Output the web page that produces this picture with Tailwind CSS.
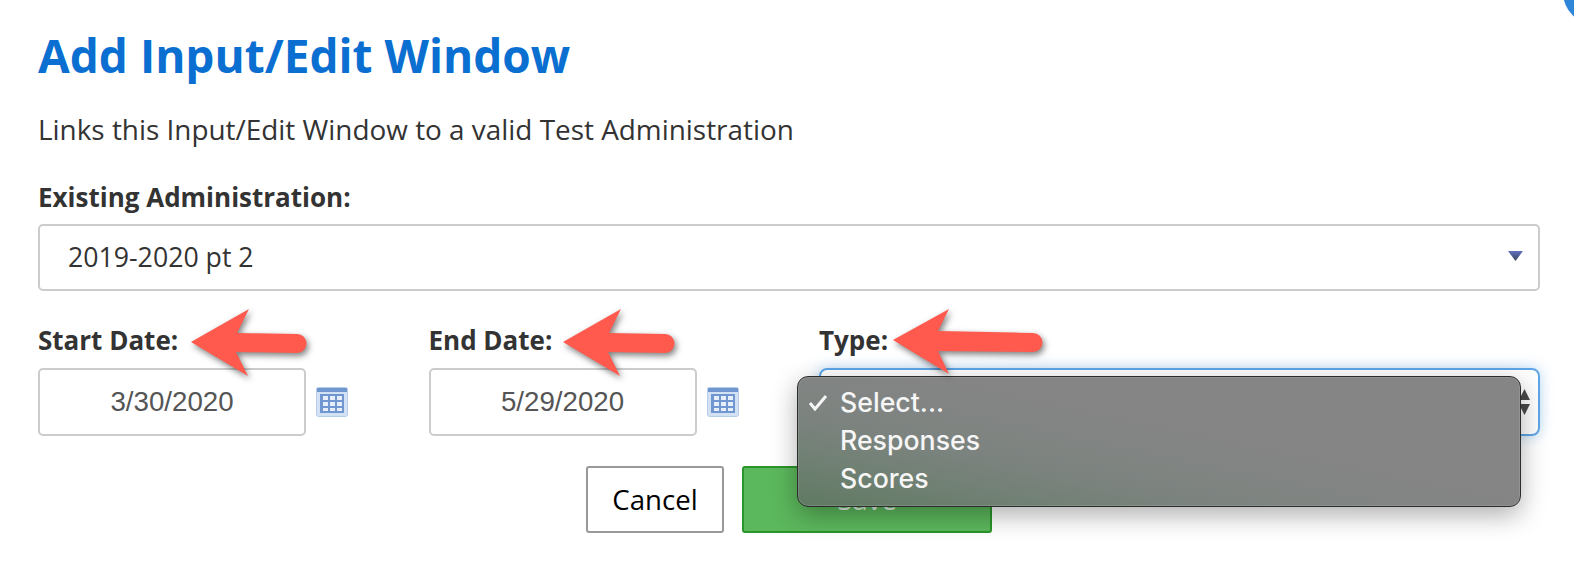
<!doctype html>
<html lang="en">
<head>
<meta charset="utf-8">
<title>Add Input/Edit Window</title>
<script src="https://cdn.jsdelivr.net/npm/@tailwindcss/browser@4"></script>
</head>
<body class="bg-white">
<div class="relative w-[1574px] h-[572px] overflow-hidden bg-white font-['Open_Sans',sans-serif] text-[#333] pl-[38px] pr-[34px] pt-[27px]">
  <div class="absolute left-[1563px] top-[-41px] w-[66px] h-[66px] rounded-full bg-[#2f86d9]"></div>

  <h1 class="text-[46px] leading-[56px] font-bold text-[#0a6fd0]">Add Input/Edit Window</h1>
  <p class="mt-[29px] text-[27.9px] leading-[34px]">Links this Input/Edit Window to a valid Test Administration</p>

  <label class="block mt-[34px] text-[26px] leading-[34px] font-bold">Existing Administration:</label>
  <div class="mt-[10px] h-[67px] flex items-center justify-between rounded-[5px] border-2 border-[#cccccc] pl-[28px] pr-[15px] text-[26.7px]">
    <span>2019-2020 pt 2</span>
    <svg class="-mt-[3px]" width="15" height="10" viewBox="0 0 15 10"><defs><linearGradient id="caret" x1="0" y1="0" x2="0" y2="1"><stop offset="0" stop-color="#5f72c0"/><stop offset="1" stop-color="#3c4358"/></linearGradient></defs><path d="M0 0h15L7.5 10z" fill="url(#caret)"/></svg>
  </div>

  <div class="mt-[32px] grid grid-cols-[390.5px_390.5px_1fr]">
    <div>
      <div class="text-[26px] leading-[34px] font-bold">Start Date:</div>
      <div class="mt-[11px] flex items-center gap-[10px]">
        <div class="w-[268px] h-[68px] flex items-center justify-center rounded-[5px] border-2 border-[#cccccc] font-['Liberation_Sans',sans-serif] text-[27.7px] text-[#555]">3/30/2020</div>
        <svg width="32" height="30" viewBox="0 0 32 30"><rect x="0.5" y="0.5" width="31" height="29" rx="2" fill="#d3e1f5" stroke="#b7cceb"/><rect x="1" y="1" width="30" height="4" fill="#7097d0"/><rect x="4" y="7" width="24" height="19" fill="#7197d0"/><g fill="#e6effb"><rect x="7" y="9" width="5" height="4"/><rect x="14" y="9" width="5" height="4"/><rect x="21" y="9" width="5" height="4"/><rect x="7" y="15" width="5" height="4"/><rect x="14" y="15" width="5" height="4"/><rect x="21" y="15" width="5" height="4"/><rect x="7" y="21" width="5" height="3"/><rect x="14" y="21" width="5" height="3"/><rect x="21" y="21" width="5" height="3"/></g></svg>
      </div>
    </div>
    <div>
      <div class="text-[26px] leading-[34px] font-bold">End Date:</div>
      <div class="mt-[11px] flex items-center gap-[10px]">
        <div class="w-[268px] h-[68px] flex items-center justify-center rounded-[5px] border-2 border-[#cccccc] font-['Liberation_Sans',sans-serif] text-[27.7px] text-[#555]">5/29/2020</div>
        <svg width="32" height="30" viewBox="0 0 32 30"><rect x="0.5" y="0.5" width="31" height="29" rx="2" fill="#d3e1f5" stroke="#b7cceb"/><rect x="1" y="1" width="30" height="4" fill="#7097d0"/><rect x="4" y="7" width="24" height="19" fill="#7197d0"/><g fill="#e6effb"><rect x="7" y="9" width="5" height="4"/><rect x="14" y="9" width="5" height="4"/><rect x="21" y="9" width="5" height="4"/><rect x="7" y="15" width="5" height="4"/><rect x="14" y="15" width="5" height="4"/><rect x="21" y="15" width="5" height="4"/><rect x="7" y="21" width="5" height="3"/><rect x="14" y="21" width="5" height="3"/><rect x="21" y="21" width="5" height="3"/></g></svg>
      </div>
    </div>
    <div>
      <div class="text-[26px] leading-[34px] font-bold">Type:</div>
      <div class="mt-[11px] h-[68px] flex items-center justify-end rounded-[8px] border-2 border-[#5ea6e6] shadow-[0_0_14px_rgba(94,166,230,0.45)] pr-[8px]">
        <svg width="11" height="26" viewBox="0 0 11 26"><path d="M5.5 0L11 11H0zM5.5 26L0 15h11z" fill="#4a4a4a"/></svg>
      </div>
    </div>
  </div>

  <div class="mt-[30px] flex gap-[18px] pl-[548px]">
    <button class="w-[138px] h-[67px] rounded-[3px] border-2 border-[#999] bg-white text-[27.6px] text-black">Cancel</button>
    <button class="w-[250px] h-[67px] rounded-[3px] border-2 border-[#2a952a] bg-[#5cb85c] text-[27.6px] text-white/80">Save</button>
  </div>

  <!-- open native select menu -->
  <div class="absolute left-[797px] top-[376px] w-[724px] h-[131px] rounded-[11px] border border-[#2c2c2c] bg-[linear-gradient(12deg,#5f7a62_0%,#6f8072_16%,#7c837f_32%,#858585_58%)] shadow-[0_8px_26px_rgba(0,0,0,0.32),inset_0_0_0_1px_rgba(255,255,255,0.12)] font-['Inter',sans-serif] font-medium text-[26.7px] leading-[38px] text-[#f6f6f6] pt-[6px] pl-[42px]">
    <svg class="absolute left-[10px] top-[17px]" width="20" height="17" viewBox="0 0 20 17"><path d="M2 9l5 6L18 2" fill="none" stroke="#f6f6f6" stroke-width="3"/></svg>
    <div>Select...</div>
    <div>Responses</div>
    <div>Scores</div>
  </div>

  <!-- annotation arrows -->
  <svg class="absolute left-0 top-0 pointer-events-none drop-shadow-[2px_3px_3px_rgba(0,0,0,0.5)]" width="1574" height="572" viewBox="0 0 1574 572">
    <path fill="#ff5a4d" d="M191 342L249 309L237 333L297 334A9.5 9.5 0 0 1 297 353L236 352L248 376Z"/>
    <path fill="#ff5a4d" d="M563 342L621 309L609 333L665 334A9.5 9.5 0 0 1 665 353L608 352L620 376Z"/>
    <path fill="#ff5a4d" d="M893 340L949 309L938 331L1033 333A9.5 9.5 0 0 1 1033 352L938 351L949 374Z"/>
  </svg>
</div>
</body>
</html>
